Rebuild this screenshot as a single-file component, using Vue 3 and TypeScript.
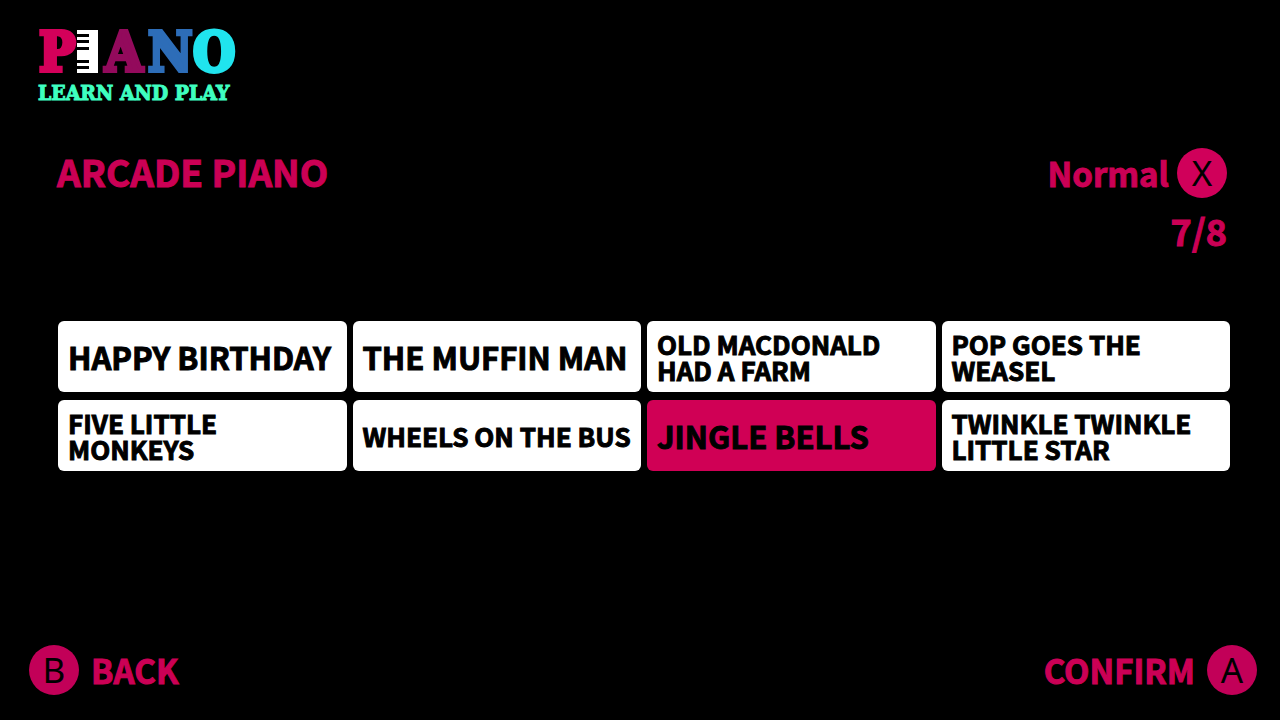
<script setup lang="ts">
import { ref } from 'vue'

type Size = 'large' | 'small'

interface Song {
  title: string
  size: Size
}

const songs: Song[] = [
  { title: 'HAPPY BIRTHDAY', size: 'large' },
  { title: 'THE MUFFIN MAN', size: 'large' },
  { title: 'OLD MACDONALD HAD A FARM', size: 'small' },
  { title: 'POP GOES THE WEASEL', size: 'small' },
  { title: 'FIVE LITTLE MONKEYS', size: 'small' },
  { title: 'WHEELS ON THE BUS', size: 'small' },
  { title: 'JINGLE BELLS', size: 'large' },
  { title: 'TWINKLE TWINKLE LITTLE STAR', size: 'small' },
]

const levels: string[] = ['Normal', 'Hard']
const level = ref(0)
const selected = ref(6)

function nextLevel(): void {
  level.value = (level.value + 1) % levels.length
}
</script>

<template>
  <div class="screen">
    <svg class="logo" viewBox="0 0 204 80" role="img" aria-label="Piano learn and play">
      <g class="logo-big">
        <text x="3" y="45" fill="#d4005a" stroke="#d4005a">P</text>
        <text x="69" y="45" fill="#930a5c" stroke="#930a5c">A</text>
        <text x="112" y="45" fill="#2d6db8" stroke="#2d6db8">N</text>
        <text x="157" y="45" fill="#20e4ee" stroke="#20e4ee">O</text>
      </g>
      <rect x="41" y="4" width="21" height="43" fill="#fff" />
      <g fill="#000">
        <rect x="41" y="8" width="12" height="3" />
        <rect x="41" y="14" width="12" height="3" />
        <rect x="41" y="21" width="12" height="3" />
        <rect x="41" y="34" width="12" height="3" />
        <rect x="41" y="40" width="12" height="3" />
      </g>
      <text class="logo-small" x="2" y="74">LEARN AND PLAY</text>
    </svg>

    <header class="header">
      <h1 class="heading">ARCADE PIANO</h1>
      <div class="status">
        <button class="action" type="button" @click="nextLevel">
          {{ levels[level] }}
          <span class="key">X</span>
        </button>
        <p class="count">{{ selected + 1 }}/{{ songs.length }}</p>
      </div>
    </header>

    <main class="songs">
      <button
        v-for="(song, i) in songs"
        :key="song.title"
        type="button"
        class="song"
        :class="[song.size, { selected: i === selected }]"
        :aria-pressed="i === selected"
        @click="selected = i"
      >
        {{ song.title }}
      </button>
    </main>

    <footer class="footer">
      <button class="action back" type="button"><span class="key">B</span>BACK</button>
      <button class="action confirm" type="button">CONFIRM<span class="key">A</span></button>
    </footer>
  </div>
</template>

<style>
html,
body {
  background: #000;
}
</style>

<style scoped>
.screen {
  box-sizing: border-box;
  min-height: 100vh;
  display: flex;
  flex-direction: column;
  padding: 26px 0 25px;
  background: #000;
  color: #cb0055;
  font-family: "Noto Sans CJK JP", "Noto Sans", sans-serif;
  font-weight: 700;
}

.logo {
  width: 204px;
  height: 80px;
  margin-left: 36px;
  overflow: visible;
}

.logo text {
  font-family: "DejaVu Serif Condensed", "DejaVu Serif", serif;
  font-weight: 700;
}

.logo-big text {
  font-size: 54px;
  stroke-width: 4px;
}

.logo .logo-small {
  font-size: 21px;
  fill: #3fffc0;
  stroke: #3fffc0;
}

.header {
  display: flex;
  justify-content: space-between;
  margin: 42px 53px 0 57px;
}

.heading,
.count {
  margin: 0;
  font-size: 36px;
  line-height: 46px;
  -webkit-text-stroke: 1px currentColor;
}

.heading {
  font-size: 37px;
}

.status {
  display: flex;
  flex-direction: column;
  align-items: flex-end;
  gap: 9px;
}

button {
  border: 0;
  padding: 0;
  font: inherit;
  color: inherit;
  cursor: pointer;
}

.action {
  display: flex;
  align-items: center;
  gap: 8px;
  background: none;
  font-size: 33px;
  line-height: 50px;
  -webkit-text-stroke: 1px currentColor;
}

.key {
  width: 50px;
  height: 50px;
  border-radius: 50%;
  background: #d0005a;
  color: #000;
  font-family: "Noto Sans", sans-serif;
  font-size: 35px;
  font-weight: 400;
  text-align: center;
  -webkit-text-stroke: 0;
}

.songs {
  display: grid;
  grid-template-columns: repeat(4, 1fr);
  grid-auto-rows: 71px;
  gap: 8px 6px;
  margin: 68px 50px 0 58px;
}

.song {
  padding: 0 6px 0 10px;
  border-radius: 6px;
  background: #fff;
  color: #000;
  text-align: left;
  -webkit-text-stroke: 1px currentColor;
}

.song.large {
  font-size: 31px;
  line-height: 32px;
}

.song.small {
  font-size: 26px;
  line-height: 26px;
}

.song.selected {
  background: #d00055;
}

.footer {
  display: flex;
  justify-content: space-between;
  margin: auto 23px 0 29px;
}

.footer .action {
  gap: 12px;
}

.footer .key {
  background: #c20058;
}
</style>
